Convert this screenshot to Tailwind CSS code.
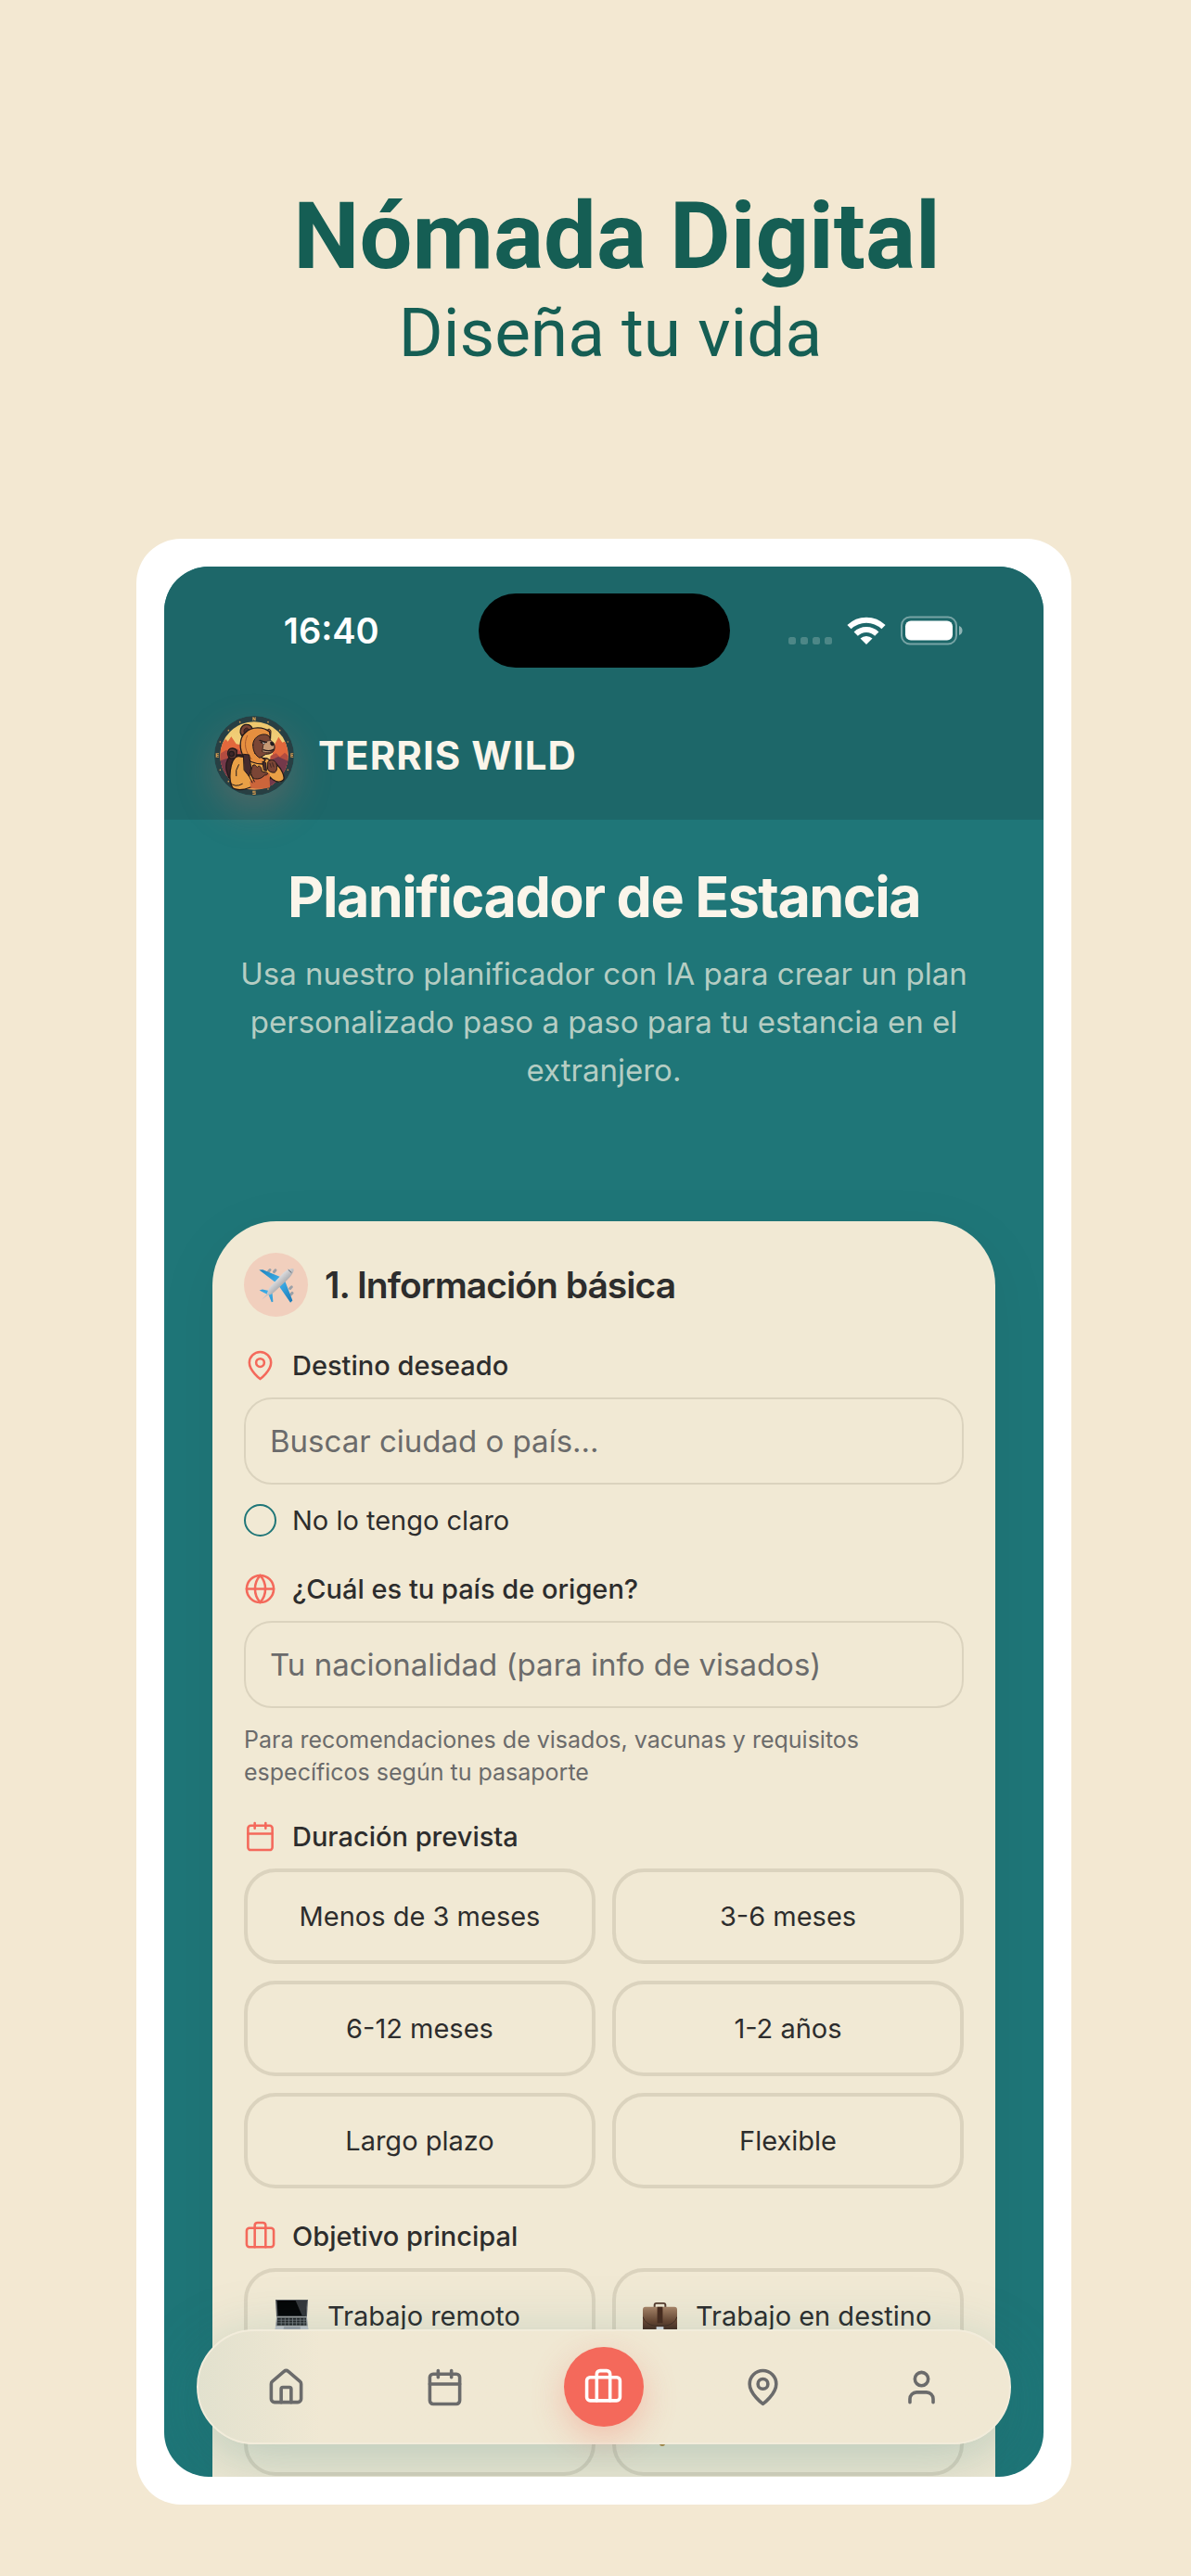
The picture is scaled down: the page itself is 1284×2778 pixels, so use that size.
<!DOCTYPE html>
<html lang="es">
<head>
<meta charset="utf-8">
<meta name="viewport" content="width=device-width, initial-scale=1">
<title>Nómada Digital</title>
<script src="https://cdn.jsdelivr.net/npm/@tailwindcss/browser@4"></script>
</head>
<body class="min-h-screen bg-[#f3e8d2] pt-[203px] pr-[129px] pb-[77px] pl-[147px] font-['Inter',sans-serif] text-[#2d2d2d]">

<!-- Icon set -->
<svg class="hidden" aria-hidden="true">
  <symbol id="pin" viewBox="0 0 24 24"><path d="M20 10c0 6-8 12-8 12s-8-6-8-12a8 8 0 0 1 16 0Z"/><circle cx="12" cy="10" r="3"/></symbol>
  <symbol id="globe" viewBox="0 0 24 24"><circle cx="12" cy="12" r="10"/><path d="M12 2a15 15 0 0 0 0 20 15 15 0 0 0 0-20M2 12h20"/></symbol>
  <symbol id="calendar" viewBox="0 0 24 24"><rect x="3" y="4" width="18" height="18" rx="2"/><path d="M8 2v4M16 2v4M3 10h18"/></symbol>
  <symbol id="case" viewBox="0 0 24 24"><rect x="2" y="6" width="20" height="14" rx="2"/><path d="M16 20V4a2 2 0 0 0-2-2h-4a2 2 0 0 0-2 2v16"/></symbol>
  <symbol id="home" viewBox="0 0 24 24"><path d="M15 21v-8a1 1 0 0 0-1-1h-4a1 1 0 0 0-1 1v8"/><path d="M3 10a2 2 0 0 1 .709-1.528l7-5.999a2 2 0 0 1 2.582 0l7 5.999A2 2 0 0 1 21 10v9a2 2 0 0 1-2 2H5a2 2 0 0 1-2-2z"/></symbol>
  <symbol id="user" viewBox="0 0 24 24"><path d="M19 21v-2a4 4 0 0 0-4-4H9a4 4 0 0 0-4 4v2"/><circle cx="12" cy="7" r="4"/></symbol>
</svg>

<header class="text-center font-['Roboto',sans-serif] text-[#155e54]">
  <h1 class="pl-[28px] text-[101px] leading-[104px] font-bold">Nómada Digital</h1>
  <p class="pl-[14px] text-[73px] leading-[104px]">Diseña tu vida</p>
</header>

<main class="mt-[170px] rounded-[48px] bg-white p-[30px]">
  <div class="relative overflow-hidden rounded-[48px] bg-[#1f7678]">

    <div class="bg-[#1d6769] pt-[29px] pb-[26px]">
      <div class="grid grid-cols-[1fr_271px_1fr] items-center">
        <time class="pl-[22px] text-center text-[38px] leading-[48px] font-semibold text-white">16:40</time>
        <div class="h-[80px] rounded-full bg-black"></div>
        <div class="flex items-center justify-center gap-4 pr-[23px]">
          <svg class="h-[32px] w-[47px]" viewBox="0 0 47 32" fill="#4d8787"><rect y="23" width="8" height="8" rx="2.5"/><rect x="13" y="23" width="8" height="8" rx="2.5"/><rect x="26" y="23" width="8" height="8" rx="2.5"/><rect x="39" y="23" width="8" height="8" rx="2.5"/></svg>
          <svg class="h-[32px] w-[42px]" viewBox="0 0 42 32" fill="none" stroke="#fff" stroke-width="6"><path d="M2.500 12.200a26.500 26.500 0 0 1 37 0"/><path d="M9.700 19.600a16 16 0 0 1 22.600 0"/><path d="M14.500 24.500a9.500 9.500 0 0 1 13 0L21 31z" fill="#fff" stroke="none"/></svg>
          <svg class="h-[32px] w-[67px]" viewBox="0 0 67 32" fill="none"><rect x="1" y="1.500" width="59" height="29" rx="9" stroke="#77a4a5" stroke-width="2"/><rect x="5" y="5.500" width="51" height="21" rx="6" fill="#fff"/><path d="M63 11c2 .5 3.500 2.500 3.500 5s-1.500 4.500-3.500 5z" fill="#8eb3b4"/></svg>
        </div>
      </div>

      <div class="mt-[52px] flex items-center gap-[26px] pl-[54px]">
        <svg class="size-[86px] shrink-0 rounded-full shadow-[0_17px_43px_rgba(244,105,91,0.25)]" viewBox="33 36 258 258" role="img" aria-label="Terris Wild">
          <defs><clipPath id="disc"><circle cx="162" cy="165" r="110"/></clipPath><linearGradient id="sky" x1="0" y1="0" x2="0" y2="1"><stop offset="0" stop-color="#eec66b"/><stop offset=".45" stop-color="#f3d481"/><stop offset="1" stop-color="#e8924f"/></linearGradient></defs>
          <circle cx="162" cy="165" r="129" fill="#283f43"/>
          <g clip-path="url(#disc)">
            <rect x="50" y="50" width="224" height="230" fill="url(#sky)"/>
            <path d="M50 135l20-24 7 8 11-16 16 24 14 3v150H50zM225 135l8-16 8-15 12 18 8-3 18 22v140h-75z" fill="#e2683c"/>
            <path d="M50 160l22-14 14 12 20-16 14 10v130H50zM215 165l18-8 12 12 16-14 18 16v112h-80z" fill="#b34c40"/>
            <path d="M50 182l35-12 30 12v100H50zM210 182l30-14 36 16v96h-70z" fill="#73394a"/>
          </g>
          <g fill="#d29b50"><path d="M157 40h3l4 6v-6h3v12h-3l-4-6v6h-3zM38 157h10v3h-6v2h5v3h-5v2h6v3H38zM280 157h9v3h-6v2h5v3h-5v2h6v3h-9zM157 278h10v3h-7v2h7v8h-10v-3h7v-2h-7z"/><circle cx="116" cy="56" r="2.500"/><circle cx="207" cy="56" r="2.500"/><circle cx="79" cy="83" r="2.500"/><circle cx="245" cy="83" r="2.500"/><circle cx="52" cy="120" r="2.500"/><circle cx="271" cy="120" r="2.500"/><circle cx="52" cy="211" r="2.500"/><circle cx="271" cy="211" r="2.500"/><circle cx="79" cy="248" r="2.500"/><circle cx="245" cy="248" r="2.500"/><circle cx="207" cy="273" r="2.500"/></g>
          <g stroke="#231a1b" stroke-width="4" stroke-linejoin="round" stroke-linecap="round">
            <path d="M72 210c-3-24 6-40 20-48h50v60l-40 22-22-8z" fill="#3c2428"/>
            <path d="M80 146c6-8 20-6 26 2l-2 24-18 3c-10-5-12-20-6-29z" fill="#5b3732"/><circle cx="89" cy="159" r="8" fill="#3d2629"/>
            <path d="M120 168c-18-5-28 9-32 28-6 24-7 59 6 74 18 9 44 2 56-3l56-5 8-28c8 12 28 22 42 10 8-10-6-38-22-52l-30-18z" fill="#e9a046"/>
            <path d="M148 248l54-30 10 5 1 45q-28 8-62 1z" fill="#cc653b" stroke="none"/>
            <path d="M122 100c-10-14-2-36 15-36 12 0 18 7 20 16z" fill="#7b4535"/><path d="M131 94c-6-10 0-19 8-19l8 7z" fill="#4e2b29" stroke-width="2"/>
            <path d="M202 90c0-12 12-16 14-4l-1 22z" fill="#a15938" stroke-width="3"/>
            <path d="M128 168c-14-22-16-60 6-78 20-20 58-20 78-2l2 16-44 14-6 38 34 22-8 14c-24 0-50-10-62-24z" fill="#e68f3f"/>
            <path d="M140 100c-12 24-8 52 14 76" fill="none" stroke="#a95a2d" stroke-width="3"/>
            <path d="M158 130c0-20 18-35 38-34 13 1 18 8 18 19 8 5 15 13 14 25-1 14-14 20-28 20l-20 12c-14-8-22-22-22-42z" fill="#7b4635" stroke-width="3"/>
            <path d="M192 130c6-10 14-15 23-14 9 4 14 12 12 24-6 15-24 18-38 12z" fill="#c69975" stroke-width="2"/>
            <path d="M214 120q14-2 12 11-9 6-12-4z" fill="#221b1e" stroke="none"/><path d="M180 115l22 7M184 122l12 3M192 146q18 6 32-1" fill="none"/><path d="M188 121l10 4-6 2z" fill="#dcebec" stroke="none"/>
            <path d="M128 160l18 2 6 42-6 28-16-20zM190 184l10 4 2 26-8-2z" fill="#452b2d" stroke-width="3"/>
            <path d="M158 196c6-5 10 2 14 6 5-6 10-4 13 4l2 10 17 4c5 5-2 8-8 8l-8 7c-14 8-30 6-34-4-4-8-2-26 4-35z" fill="#7b4535" stroke-width="3"/>
            <path d="M207 184c8-9 20-6 26 4 5 12 3 26-4 31-10 2-20-3-23-10z" fill="#7b4535" stroke-width="3"/><path d="M213 190l4 12M221 188l4 13" fill="none" stroke-width="2"/>
            <path d="M144 228l12 24M151 225l12 24M84 252q16 18 40 4M112 194q-12 18-8 36" fill="none" stroke-width="3"/>
          </g>
        </svg>
        <span class="text-[42px] leading-[52px] font-bold tracking-wide text-[#faf5ea]">TERRIS WILD</span>
      </div>
    </div>

    <section class="mt-[47px] px-[70px] text-center">
      <h2 class="text-[61px] leading-[72px] font-bold tracking-tight text-[#faf5ea]">Planificador de Estancia</h2>
      <p class="mt-[21px] text-[33px] leading-[52px] text-[#b5cdc3]">Usa nuestro planificador con IA para crear un plan personalizado paso a paso para tu estancia en el extranjero.</p>
    </section>

    <form class="mx-[52px] mt-[137px] rounded-t-[69px] bg-[#f1e9d4] px-[34px] pt-[34px] pb-px shadow-[0_17px_70px_rgba(0,0,0,0.06)]">
      <div class="flex items-center gap-[18px]">
        <span class="flex size-[69px] items-center justify-center rounded-full bg-[#f1cfbd]">
          <svg class="size-[38px]" viewBox="175 200 116 116" aria-hidden="true">
            <defs><linearGradient id="wing" x1="0" y1="0" x2="1" y2="1"><stop offset="0" stop-color="#1c82bd"/><stop offset=".5" stop-color="#3fb0ea"/><stop offset="1" stop-color="#1a78b4"/></linearGradient><linearGradient id="hull" x1="0" y1="0" x2="1" y2="1"><stop offset=".3" stop-color="#f8f8fa"/><stop offset=".7" stop-color="#8e9094"/></linearGradient></defs>
            <g fill="#9ba0a7"><rect x="205" y="202" width="9" height="16" rx="4" transform="rotate(40 209 210)"/><rect x="223" y="203" width="9" height="16" rx="4" transform="rotate(40 227 211)"/><rect x="276" y="258" width="9" height="16" rx="4" transform="rotate(45 280 266)"/><rect x="278" y="278" width="9" height="16" rx="4" transform="rotate(45 282 286)"/></g>
            <path d="M176 208l12-1 63 26-17 19zM238 256l20-20 28 72-7 7zM177 275l10-3 25 5-10 11zM207 289l12-10 3 33-5 2z" fill="url(#wing)"/>
            <path d="M289 204c-10-5-26 6-37 17l-38 40c-8 9-10 19-12 25l-18 20 20-15c7-1 14-3 22-11l42-39c13-12 25-29 21-37z" fill="url(#hull)"/>
            <path d="M272 207l11 10" stroke="#54606b" stroke-width="3"/>
          </svg>
        </span>
        <h3 class="text-[39px] leading-[48px] font-semibold tracking-tight">1. Información básica</h3>
      </div>

      <label for="destino" class="mt-[35px] flex items-center gap-[17px] text-[29px] leading-[35px] font-medium">
        <svg class="size-[35px] fill-none stroke-[#f4695b] [stroke-linecap:round] [stroke-linejoin:round] stroke-[1.75]"><use href="#pin"/></svg>Destino deseado
      </label>
      <input id="destino" type="text" placeholder="Buscar ciudad o país..." class="mt-[17px] block h-[94px] w-full rounded-[30px] border-2 border-[#dbd3be] px-[26px] text-[33px] placeholder:text-[#6b6b6b]">
      <label class="mt-[21px] flex items-center gap-[17px] text-[29px] leading-[35px]">
        <input type="checkbox" class="size-[35px] appearance-none rounded-full border-2 border-[#1f7678]">No lo tengo claro
      </label>

      <label for="origen" class="mt-[39px] flex items-center gap-[17px] text-[29px] leading-[35px] font-medium">
        <svg class="size-[35px] fill-none stroke-[#f4695b] [stroke-linecap:round] [stroke-linejoin:round] stroke-[1.75]"><use href="#globe"/></svg>¿Cuál es tu país de origen?
      </label>
      <input id="origen" type="text" placeholder="Tu nacionalidad (para info de visados)" class="mt-[17px] block h-[94px] w-full rounded-[30px] border-2 border-[#dbd3be] px-[26px] text-[33px] placeholder:text-[#6b6b6b]">
      <p class="mt-[17px] text-[25px] leading-[35px] text-[#6b6b6b]">Para recomendaciones de visados, vacunas y requisitos específicos según tu pasaporte</p>

      <h4 class="mt-[34px] flex items-center gap-[17px] text-[29px] leading-[35px] font-medium">
        <svg class="size-[35px] fill-none stroke-[#f4695b] [stroke-linecap:round] [stroke-linejoin:round] stroke-[1.75]"><use href="#calendar"/></svg>Duración prevista
      </h4>
      <div class="mt-[17px] grid auto-rows-[103px] grid-cols-2 gap-[18px] text-[29px]">
        <button type="button" class="rounded-[34px] border-4 border-[#dbd3be]">Menos de 3 meses</button>
        <button type="button" class="rounded-[34px] border-4 border-[#dbd3be]">3-6 meses</button>
        <button type="button" class="rounded-[34px] border-4 border-[#dbd3be]">6-12 meses</button>
        <button type="button" class="rounded-[34px] border-4 border-[#dbd3be]">1-2 años</button>
        <button type="button" class="rounded-[34px] border-4 border-[#dbd3be]">Largo plazo</button>
        <button type="button" class="rounded-[34px] border-4 border-[#dbd3be]">Flexible</button>
      </div>

      <h4 class="mt-[34px] flex items-center gap-[17px] text-[29px] leading-[35px] font-medium">
        <svg class="size-[35px] fill-none stroke-[#f4695b] [stroke-linecap:round] [stroke-linejoin:round] stroke-[1.75]"><use href="#case"/></svg>Objetivo principal
      </h4>
      <div class="mt-[17px] grid auto-rows-[103px] grid-cols-2 gap-[18px] text-[29px]">
        <button type="button" class="flex items-center gap-[20px] rounded-[34px] border-4 border-[#dbd3be] pl-[29px] whitespace-nowrap">
          <svg class="size-[37px] shrink-0" viewBox="0 0 36 36" aria-hidden="true"><path d="M1 1h34l-1 18H2z" fill="#55575c"/><path d="M2.500 2h31l-1 16h-29z" fill="#050506"/><path d="M22 2h11.500l-1 16H29z" fill="#35363a"/><path d="M2 19h32l1 10H1z" fill="#9a9ca0"/><path d="M3 20h30l.5 8h-31z" fill="#252628"/><path d="M3 22.500h30M3 25.200h30M7 20v8M11 20v8M15 20v8M19 20v8M23 20v8M27 20v8M31 20v8" stroke="#85878b" stroke-width=".7"/><path d="M1 29h34l1 5H0z" fill="#c0c2c7"/><path d="M10 29h17v4H9z" fill="#9da0a7"/></svg>
          Trabajo remoto
        </button>
        <button type="button" class="flex items-center gap-[20px] rounded-[34px] border-4 border-[#dbd3be] pl-[29px] whitespace-nowrap">
          <svg class="size-[37px] shrink-0" viewBox="0 0 38 38" aria-hidden="true"><defs><linearGradient id="leather" x1="0" y1="0" x2="0" y2="1"><stop offset="0" stop-color="#a88468"/><stop offset=".6" stop-color="#68432f"/><stop offset="1" stop-color="#3e251c"/></linearGradient></defs><path d="M13 11V7q0-2 2-2h8q2 0 2 2v4" fill="none" stroke="#563a2d" stroke-width="2"/><rect y="9" width="38" height="27" rx="3" fill="url(#leather)"/><path d="M0 20q3 9 14 10h10q11-1 14-10" fill="none" stroke="#432a20"/><path d="M16 9h6v18h-6z" fill="#48291c"/><path d="M15 31h8v5h-8z" fill="#d9dce2"/></svg>
          Trabajo en destino
        </button>
        <button type="button" aria-label="Estudios" class="rounded-[34px] border-4 border-[#dbd3be]"></button>
        <button type="button" aria-label="Ocio" class="flex items-center rounded-[34px] border-4 border-[#dbd3be] pl-[29px]">
          <svg class="size-[38px]" viewBox="0 0 38 38" aria-hidden="true"><circle cx="21" cy="35" r="3" fill="#b8893d"/></svg>
        </button>
      </div>
    </form>

    <nav class="absolute inset-x-[35px] bottom-[35px] grid h-[124px] grid-cols-5 items-center justify-items-center rounded-full border-2 border-[#f2ecdb] bg-linear-to-r from-[#e2e1ce] via-[#f0e8d3] via-15% to-[#f0e8d3] px-[9px] text-[#6b6b6b] shadow-[0_17px_70px_rgba(31,118,120,0.28)]">
      <a href="#inicio" aria-label="Inicio"><svg class="size-[43px] fill-none stroke-current stroke-2 [stroke-linecap:round] [stroke-linejoin:round]"><use href="#home"/></svg></a>
      <a href="#agenda" aria-label="Agenda"><svg class="size-[43px] fill-none stroke-current stroke-2 [stroke-linecap:round] [stroke-linejoin:round]"><use href="#calendar"/></svg></a>
      <a href="#planificador" aria-label="Planificador" aria-current="page" class="flex size-[86px] items-center justify-center rounded-full bg-[#f4695b] text-white shadow-[0_12px_36px_rgba(244,105,91,0.32)]"><svg class="size-[43px] fill-none stroke-current stroke-2 [stroke-linecap:round] [stroke-linejoin:round]"><use href="#case"/></svg></a>
      <a href="#mapa" aria-label="Mapa"><svg class="size-[43px] fill-none stroke-current stroke-2 [stroke-linecap:round] [stroke-linejoin:round]"><use href="#pin"/></svg></a>
      <a href="#perfil" aria-label="Perfil"><svg class="size-[43px] fill-none stroke-current stroke-2 [stroke-linecap:round] [stroke-linejoin:round]"><use href="#user"/></svg></a>
    </nav>
  </div>
</main>
</body>
</html>
